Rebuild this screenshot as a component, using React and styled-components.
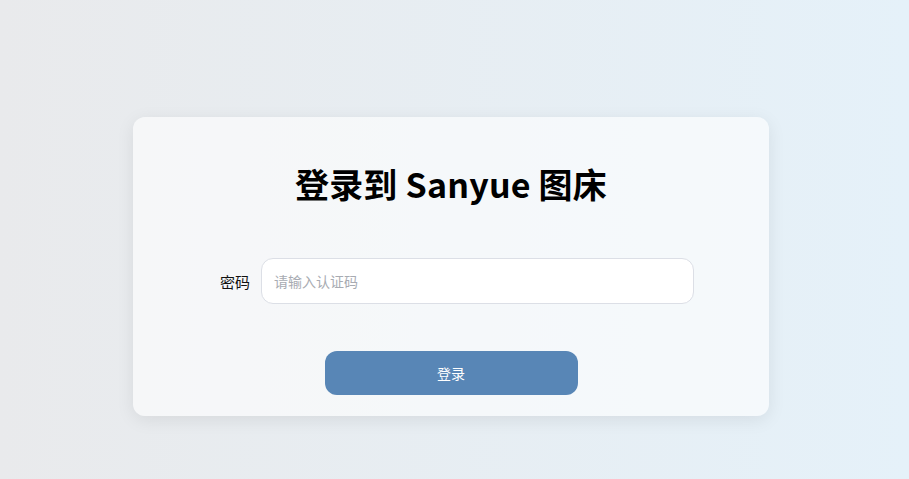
import React from "react";
import styled, { createGlobalStyle } from "styled-components";

const Global = createGlobalStyle`
  html, body { margin: 0; padding: 0; }
  body {
    font-family: "Noto Sans CJK SC", "Noto Sans", sans-serif;
    background: linear-gradient(90deg, #e9eaec 0%, #e5f1f9 100%);
    min-height: 479px;
  }
`;

const Page = styled.div`
  min-height: 479px;
  display: flex;
  justify-content: center;
  padding: 117px 7px 0 0;
  box-sizing: border-box;
`;

const Card = styled.div`
  width: 636px;
  height: 299px;
  box-sizing: border-box;
  border-radius: 12px;
  background: rgba(255, 255, 255, 0.6);
  box-shadow: 0 4px 18px rgba(0, 0, 0, 0.08);
  display: flex;
  flex-direction: column;
  align-items: center;
  padding-top: 44px;
`;

const Title = styled.h1`
  margin: 0;
  font-size: 34px;
  line-height: 46px;
  font-weight: 700;
  color: #000;
  letter-spacing: 0.2px;
`;

const Row = styled.div`
  margin-top: 51px;
  width: 486px;
  display: flex;
  align-items: center;
`;

const Label = styled.label`
  width: 53px;
  padding-right: 11px;
  box-sizing: border-box;
  text-align: right;
  font-size: 15px;
  color: #111;
  flex-shrink: 0;
`;

const Input = styled.input`
  width: 433px;
  height: 46px;
  box-sizing: border-box;
  border: 1px solid #dcdfe6;
  border-radius: 12px;
  background: #fff;
  padding: 0 12px;
  font-family: inherit;
  font-size: 14px;
  outline: none;
  &::placeholder { color: #a8abb2; }
`;

const Button = styled.button`
  margin-top: 47px;
  width: 253px;
  height: 44px;
  border: none;
  border-radius: 12px;
  background: #5886b6;
  color: #fff;
  font-family: inherit;
  font-size: 14px;
  cursor: pointer;
`;

export default function App() {
  return (
    <>
      <Global />
      <Page>
        <Card>
          <Title>登录到 Sanyue 图床</Title>
          <Row>
            <Label>密码</Label>
            <Input type="password" placeholder="请输入认证码" />
          </Row>
          <Button>登录</Button>
        </Card>
      </Page>
    </>
  );
}
